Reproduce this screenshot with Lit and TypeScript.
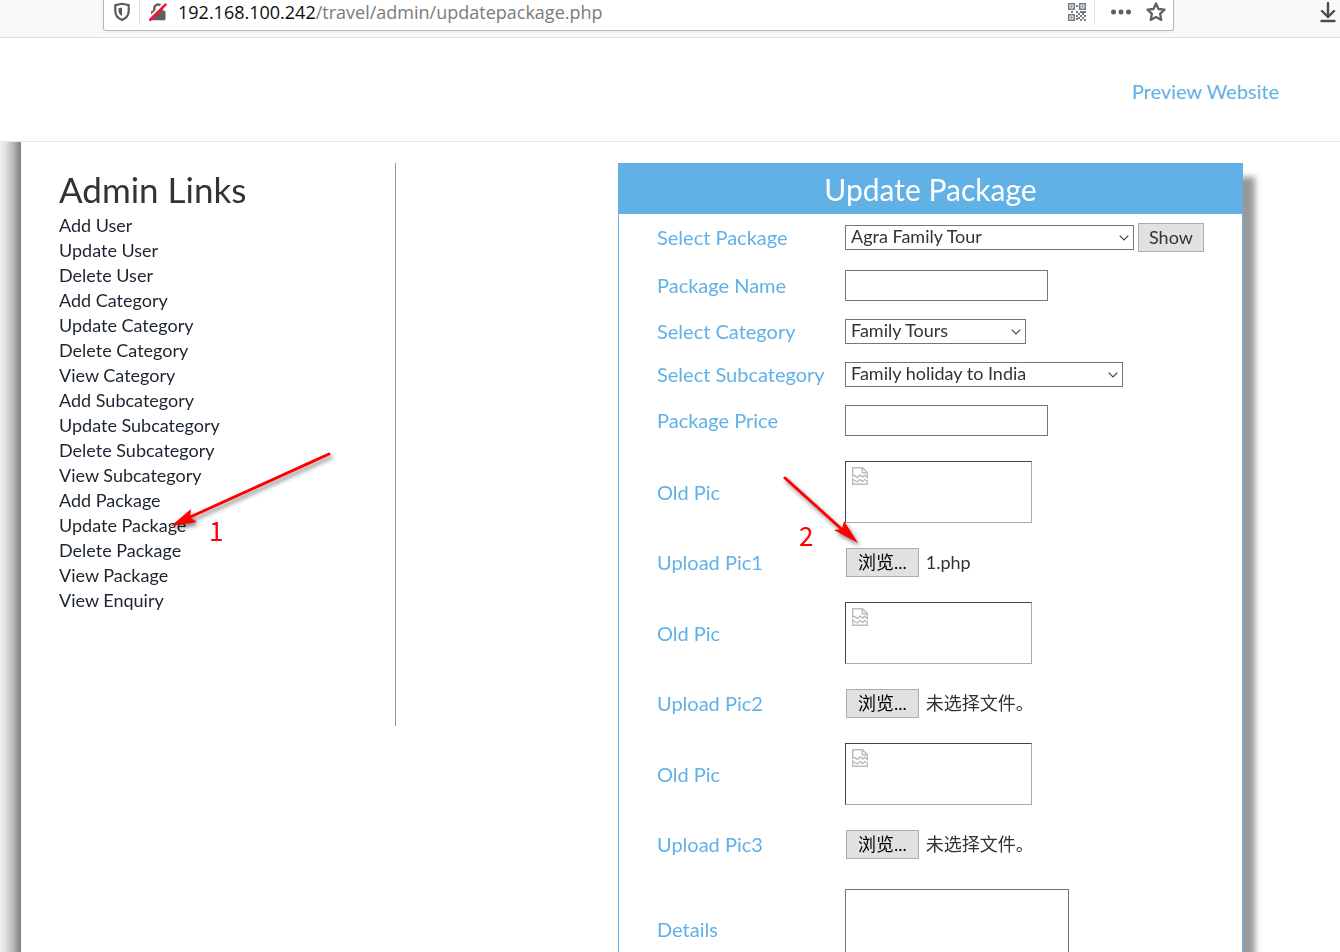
import { LitElement, html, css, svg } from "lit";
import { customElement, property } from "lit/decorators.js";

const LINKS = [
  "Add User", "Update User", "Delete User",
  "Add Category", "Update Category", "Delete Category", "View Category",
  "Add Subcategory", "Update Subcategory", "Delete Subcategory", "View Subcategory",
  "Add Package", "Update Package", "Delete Package", "View Package",
  "View Enquiry",
];

// Data dots of the QR glyph, on an 18x18 grid.
const QR_DOTS: [number, number][] = [
  [8, 2], [3, 8], [14, 8], [8, 8], [10, 10], [14, 10], [8, 12], [12, 12], [16, 12],
  [10, 14], [14, 14], [12, 16], [16, 16], [16, 8], [12, 8], [8, 15],
];

@customElement("address-bar")
export class AddressBar extends LitElement {
  static styles = css`
    :host { display: block; background: #f9f9fa; border-bottom: 1px solid #e0e0e1; }
    .bar { display: flex; align-items: flex-start; height: 37px; padding-left: 103px; }
    .field {
      flex: 1; display: flex; align-items: center; box-sizing: border-box;
      height: 31px; padding: 0 8px 6px; background: #fff;
      border: 1px solid #b8b8b9; border-top: 0; border-radius: 0 0 3px 3px;
      box-shadow: 0 1px 4px rgba(0, 0, 0, 0.06);
    }
    .icon { display: block; flex: none; }
    .rule { flex: none; width: 1px; height: 25px; background: #dedede; }
    .left { margin: 0 8px 0 7px; }
    .right { margin: 0 16px 0 8px; }
    .star { margin-left: 15px; margin-right: -1px; }
    .url {
      flex: 1; min-width: 0; margin-left: 10px; white-space: nowrap; overflow: hidden;
      font: 18px/24px "Open Sans", "Noto Sans", sans-serif; color: #7b7b7b;
    }
    .host { color: #0c0c0d; }
    .download { margin: 2px 4px 0 146px; }
  `;

  render() {
    return html`
      <div class="bar">
        <div class="field">
          <svg class="icon" width="20" height="20" viewBox="0 0 20 20">
            <path d="M10 1.800C7.900 2.300 5.700 2.800 3.300 3.100V9C3.300 13.200 6 16.400 10 18C14 16.400 16.700 13.200 16.700 9V3.100C14.300 2.800 12.100 2.300 10 1.800Z" fill="none" stroke="#5a5a5c" stroke-width="2.200" stroke-linejoin="round" />
            <path d="M10 5.500V14C7.700 12.700 6.500 11 6.500 8.500V6.200Z" fill="#5a5a5c" />
          </svg>
          <span class="rule left"></span>
          <svg class="icon" width="20" height="20" viewBox="0 0 20 20">
            <path d="M6.300 9V6.500A3.800 4 0 0 1 13.900 6.500V9" fill="none" stroke="#5f5f61" stroke-width="2.400" />
            <rect x="3" y="8.500" width="14.500" height="9.800" rx="1.500" fill="#5f5f61" />
            <path d="M0.500 16.500L16.500 0.500" stroke="#fff" stroke-width="2" />
            <path d="M1.500 18.500L18.300 1.800" stroke="#ff0f3f" stroke-width="2.600" />
          </svg>
          <span class="url"><span class="host">192.168.100.242</span>/travel/admin/updatepackage.php</span>
          <svg class="icon" width="18" height="18" viewBox="0 0 18 18" fill="#737b87">
            ${[[0, 0], [11, 0], [0, 11]].map(([x, y]) => svg`
              <rect x=${x + 0.75} y=${y + 0.75} width="5.500" height="5.500" fill="none" stroke="#737b87" stroke-width="1.500" />
              <rect x=${x + 2.5} y=${y + 2.5} width="2" height="2" />`)}
            ${QR_DOTS.map(([x, y]) => svg`<rect x=${x} y=${y} width="2" height="2" />`)}
          </svg>
          <span class="rule right"></span>
          <svg class="icon" width="20" height="20" viewBox="0 0 20 20" fill="#5f5f61">
            <circle cx="2.500" cy="10" r="2.500" /><circle cx="10" cy="10" r="2.500" /><circle cx="17.500" cy="10" r="2.500" />
          </svg>
          <svg class="icon star" width="20" height="20" viewBox="0 0 20 20">
            <path d="M10 1.500L12.500 7L18.500 7.700L14.100 11.800L15.300 17.900L10 15L4.700 17.900L5.900 11.800L1.500 7.700L7.500 7Z" fill="none" stroke="#5f5f61" stroke-width="2.300" stroke-linejoin="round" />
          </svg>
        </div>
        <svg class="icon download" width="16" height="21" viewBox="0 0 16 21">
          <path d="M8 1V15M2 9L8 15L14 9M1.500 19H14.500" fill="none" stroke="#4c4c4e" stroke-width="2.400" stroke-linecap="round" stroke-linejoin="round" />
        </svg>
      </div>`;
  }
}

@customElement("form-select")
export class FormSelect extends LitElement {
  @property() value = "";
  @property() label = "";
  static styles = css`
    :host { display: inline-grid; vertical-align: top; }
    select, svg { grid-area: 1 / 1; }
    select {
      appearance: none; box-sizing: border-box; width: 100%; height: 25px; margin: 0;
      padding: 0 24px 2px 5px; border: 1px solid #767676; border-radius: 0; background: #fff;
      font: 18px/21px Lato, sans-serif; color: #333;
    }
    svg { justify-self: end; align-self: center; margin-right: 5px; pointer-events: none; }
  `;
  render() {
    return html`
      <select aria-label=${this.label}><option>${this.value}</option></select>
      <svg width="10" height="6" viewBox="0 0 10 6"><path d="M0.700 0.700L5 5L9.300 0.700" fill="none" stroke="#444" stroke-width="1.200" /></svg>`;
  }
}

@customElement("app-root")
export class AppRoot extends LitElement {
  static styles = css`
    :host {
      display: flex; flex-direction: column; height: 100vh; background: #fff;
      font-family: Lato, "Noto Sans CJK SC", sans-serif; color: #333;
    }
    address-bar, .top { flex: none; }
    .top {
      display: flex; justify-content: flex-end; align-items: center;
      height: 104px; padding: 2px 61px 0 0; box-sizing: border-box;
      border-bottom: 1px solid #e7e7e7;
    }
    .preview { font-size: 20px; line-height: 26px; color: #61b1e7; text-decoration: none; }
    .page { flex: 1; min-height: 0; display: flex; overflow-y: auto; scrollbar-width: none; }
    .edge {
      flex: none; width: 21px; position: sticky; top: 0;
      background: linear-gradient(to right, #f1f1f1, #e2e2e2 25%, #bdbdbd 60%, #7e7e7e);
    }
    .content {
      flex: 1; display: flex; justify-content: space-between; align-items: flex-start;
      padding: 21px 97px 21px 38px;
    }
    .side {
      position: relative; box-sizing: border-box; width: 337px; min-height: 563px;
      border-right: 1px solid #999;
    }
    h1 { margin: 0; padding-top: 2px; font-weight: 400; font-size: 35px; line-height: 48px; }
    ul { list-style: none; margin: 0; padding: 0; }
    .link { display: block; font-size: 18px; line-height: 25px; color: #1b2430; text-decoration: none; }
    .card {
      position: relative; box-sizing: border-box; width: 625px;
      border: 1px solid #61b1e7; background: #fff; box-shadow: 12px 14px 6px #999;
    }
    h2 {
      margin: 0; background: #61b1e7; color: #fff; text-align: center;
      font-weight: 400; font-size: 30px; line-height: 50px;
    }
    .row {
      display: grid; grid-template-columns: 188px 1fr; align-items: center;
      padding: 9px 38px;
    }
    .row.tall { padding-block: 16px; }
    .row.details { padding-block: 21px; }
    .name { font-size: 20px; line-height: 25px; color: #61b1e7; }
    .cell { display: flex; align-items: center; gap: 4px; }
    .text, textarea {
      box-sizing: border-box; border: 1px solid #767676; border-radius: 0; background: #fff;
      font: 18px/22px Lato, sans-serif; color: #333; margin: 0; padding: 2px 5px;
    }
    .text { width: 203px; height: 31px; }
    textarea { display: block; width: 224px; height: 80px; resize: none; }
    .w-package { width: 289px; }
    .w-category { width: 181px; }
    .w-sub { width: 278px; }
    .show, .browse {
      box-sizing: border-box; height: 29px; padding: 0 10px; border: 1px solid #adadad;
      border-radius: 0; background: #e1e1e1; font: 18px/27px Lato, "Noto Sans CJK SC", sans-serif;
      color: #333; white-space: nowrap;
    }
    .browse { margin-left: 1px; padding: 0 11px; color: #000; }
    .file { position: absolute; width: 1px; height: 1px; opacity: 0; }
    .chosen { margin-left: 3px; font-size: 18px; line-height: 25px; }
    .pic {
      box-sizing: border-box; width: 187px; height: 62px; padding: 5px 6px;
      border: 1px solid; border-color: #444 #aaa #aaa #444;
    }
    .pic svg { display: block; }
    .note { position: absolute; pointer-events: none; color: #f00; font: 26px/30px "Noto Sans CJK SC", sans-serif; }
    .note svg { display: block; overflow: visible; filter: drop-shadow(2px 3px 2px rgba(0, 0, 0, 0.5)); }
    .arrow-one { left: 111px; top: 289px; }
    .digit-one { left: 150px; top: 352px; }
    .arrow-two { left: 164px; top: 312px; }
    .digit-two { left: 180px; top: 356px; }
  `;

  private pic() {
    return html`
      <div class="row tall">
        <span class="name">Old Pic</span>
        <div class="pic" role="img" aria-label="Old Pic">
          <svg width="16" height="18" viewBox="0 0 16 18" fill="none" stroke="#bbb" stroke-width="1.400">
            <path d="M0.700 9V0.700H10.500L15.300 5.500V10.500L12.500 8.300L10.800 10L8.300 8L5.300 10.500L2.700 8.500Z" />
            <path d="M10.300 0.700V5.700H15.300" />
            <path d="M0.700 17.300V12L2.700 13.500L5.300 15L8 12.500L10.500 14.500L12.700 12.500L15.300 14V17.300Z" />
          </svg>
        </div>
      </div>`;
  }

  private upload(n: number, chosen: string) {
    const id = `pic${n}`;
    return html`
      <div class="row">
        <label class="name" for=${id}>Upload Pic${n}</label>
        <div class="cell">
          <label class="browse">浏览...<input class="file" id=${id} type="file" /></label>
          <span class="chosen">${chosen}</span>
        </div>
      </div>`;
  }

  render() {
    return html`
      <address-bar></address-bar>
      <header class="top"><a class="preview" href="#">Preview Website</a></header>
      <main class="page">
        <div class="edge"></div>
        <div class="content">
          <nav class="side">
            <h1>Admin Links</h1>
            <ul>${LINKS.map((l) => html`<li><a class="link" href="#">${l}</a></li>`)}</ul>
            <div class="note arrow-one">
              <svg width="162" height="76" viewBox="0 0 162 76">
                <path d="M159 2L18 66" stroke="#f00" stroke-width="3" stroke-linecap="round" />
                <path d="M1 74L21 57L20 65.500L27 70Z" fill="#f00" />
              </svg>
            </div>
            <span class="note digit-one">1</span>
          </nav>
          <form class="card" @submit=${(e: Event) => e.preventDefault()}>
            <h2>Update Package</h2>
            <div class="row">
              <span class="name">Select Package</span>
              <div class="cell">
                <form-select class="w-package" label="Select Package" value="Agra Family Tour"></form-select>
                <button class="show" type="submit">Show</button>
              </div>
            </div>
            <div class="row">
              <label class="name" for="name">Package Name</label>
              <input class="text" id="name" type="text" />
            </div>
            <div class="row">
              <span class="name">Select Category</span>
              <form-select class="w-category" label="Select Category" value="Family Tours"></form-select>
            </div>
            <div class="row">
              <span class="name">Select Subcategory</span>
              <form-select class="w-sub" label="Select Subcategory" value="Family holiday to India"></form-select>
            </div>
            <div class="row">
              <label class="name" for="price">Package Price</label>
              <input class="text" id="price" type="text" />
            </div>
            ${this.pic()}${this.upload(1, "1.php")}
            ${this.pic()}${this.upload(2, "未选择文件。")}
            ${this.pic()}${this.upload(3, "未选择文件。")}
            <div class="row details">
              <label class="name" for="details">Details</label>
              <textarea id="details"></textarea>
            </div>
            <div class="note arrow-two">
              <svg width="76" height="70" viewBox="0 0 76 70">
                <path d="M2 2L64 58" stroke="#f00" stroke-width="3" stroke-linecap="round" />
                <path d="M75 67L51 54L59 53L61 45Z" fill="#f00" />
              </svg>
            </div>
            <span class="note digit-two">2</span>
          </form>
        </div>
      </main>`;
  }
}
